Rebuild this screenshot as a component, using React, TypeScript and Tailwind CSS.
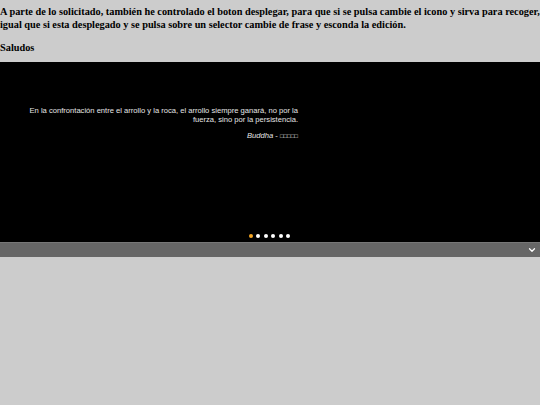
import { ChevronDown } from 'lucide-react';

const dots = [0, 1, 2, 3, 4, 5];

export default function App() {
  return (
    <div className="min-h-[405px] bg-[#cccccc] font-['Liberation_Serif',serif] text-black">
      <div className="pt-[6px]">
        <p className="text-[10.3px] font-bold leading-[12.65px]">
          A parte de lo solicitado, también he controlado el boton desplegar, para que si se pulsa cambie el icono y sirva para recoger, igual que si esta desplegado y se pulsa sobre un selector cambie de frase y esconda la edición.
        </p>
        <p className="mt-[10.5px] mb-[7.5px] text-[10.3px] font-bold leading-[12.65px]">Saludos</p>
      </div>

      <div className="flex h-[180px] flex-col bg-black font-['Liberation_Sans',Arial,sans-serif]">
        <div className="ml-[26px] mt-[44px] w-[272px] text-right text-[7.6px] leading-[9px] text-[#e6e6e6]">
          <p>
            En la confrontación entre el arrollo y la roca, el arrollo siempre ganará, no por la fuerza, sino por la persistencia.
          </p>
          <p className="mt-[7.5px]">
            <span className="italic">Buddha</span> - <span className="text-[6px]">□□□□□</span>
          </p>
        </div>
        <div className="mt-auto mb-[4px] flex justify-center gap-[3.5px] pr-[1px]">
          {dots.map((d) => (
            <span
              key={d}
              className={d === 0 ? 'h-[4px] w-[4px] rounded-full bg-[#f5a623]' : 'h-[4px] w-[4px] rounded-full bg-white'}
            />
          ))}
        </div>
      </div>

      <div className="flex h-[15px] items-center justify-end border-t border-[#777777] bg-[#666666] pr-[3px]">
        <ChevronDown className="h-[10px] w-[10px] text-white" strokeWidth={3} />
      </div>
    </div>
  );
}
